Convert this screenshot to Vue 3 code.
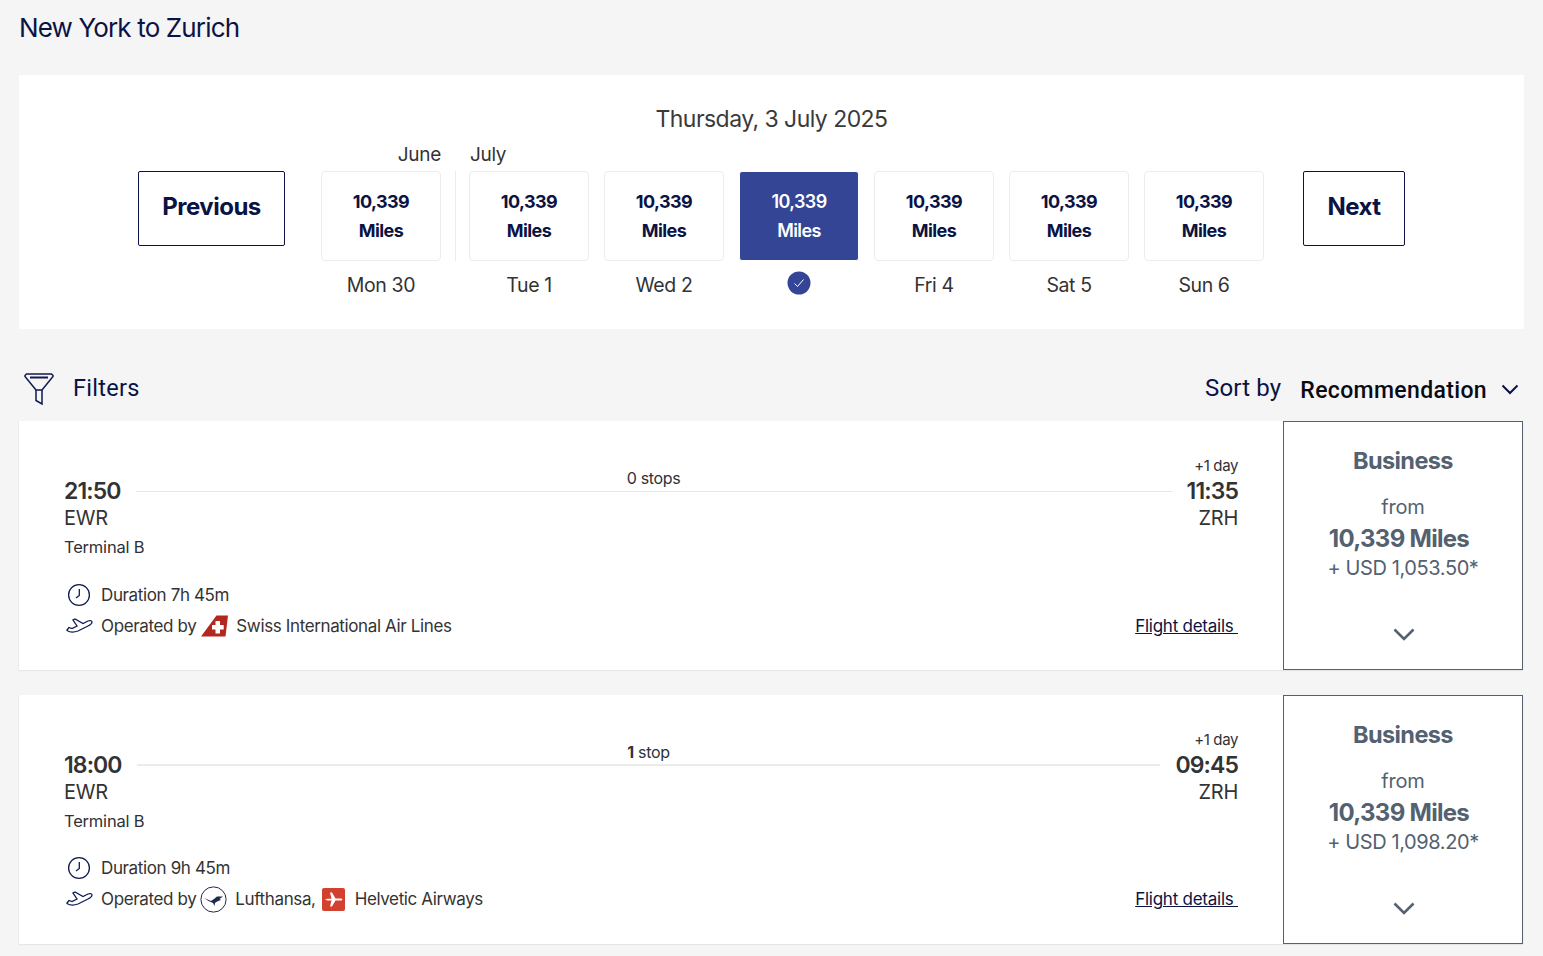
<script setup>
const days = [
  { label: 'Mon 30' }, { label: 'Tue 1', divider: true }, { label: 'Wed 2' },
  { label: '', selected: true }, { label: 'Fri 4' }, { label: 'Sat 5' }, { label: 'Sun 6' }
]
const flights = [
  { dep: '21:50', arr: '11:35', stops: '0', stopWord: ' stops', dur: '7h 45m', price: '1,053.50', swiss: true },
  { dep: '18:00', arr: '09:45', stops: '1', stopWord: ' stop', dur: '9h 45m', price: '1,098.20', swiss: false }
]
</script>

<template>
  <div class="page">
    <h1 class="title">New York to Zurich</h1>
    <section class="calendar">
      <div class="cal-date">Thursday, 3 July 2025</div>
      <div class="months">
        <span class="june">June</span>
        <span class="july">July</span>
      </div>
      <div class="strip">
        <button class="nav prev">Previous</button>
        <div class="days">
          <template v-for="d in days" :key="d.label">
            <div v-if="d.divider" class="divider"></div>
            <div class="day">
              <div class="tile" :class="{ sel: d.selected }">
                <span>10,339</span>
                <span>Miles</span>
              </div>
              <div class="day-label">
                <svg v-if="d.selected" class="check" width="24" height="24" viewBox="0 0 24 24">
                  <circle cx="12" cy="12" r="11.5" fill="#344596" />
                  <path d="M7.5 12.500l3 3 6-7" fill="none" stroke="#fff" stroke-width="1" />
                </svg>
                <template v-else>{{ d.label }}</template>
              </div>
            </div>
          </template>
        </div>
        <button class="nav next">Next</button>
      </div>
    </section>

    <div class="toolbar">
      <div class="filters">
        <svg width="32" height="34" viewBox="0 0 32 34" fill="none" stroke="#0f1a52" stroke-width="1.500">
          <path d="M3.500 3h25l1.500 1.500v1L19 19h-6L2 5.500v-1z" />
          <path d="M7 6.500h18" stroke-width="2" />
          <path d="M13 19v10.500l6 3.500V19" />
        </svg>
        <span>Filters</span>
      </div>
      <div class="sort">
        <span class="sort-label">Sort by</span>
        <span class="sort-value">Recommendation</span>
        <svg class="sort-chev" width="18" height="11" viewBox="0 0 18 11" fill="none" stroke="#0b1344" stroke-width="2">
          <path d="M1.500 1.500L9 9l7.500-7.500" />
        </svg>
      </div>
    </div>

    <div class="flights">
      <article v-for="f in flights" :key="f.dep" class="flight">
        <div class="info">
          <div class="ends">
            <div class="end">
              <div class="spacer"></div>
              <div class="time">{{ f.dep }}</div>
              <div class="code">EWR</div>
              <div class="terminal">Terminal B</div>
            </div>
            <div class="line-wrap">
              <div class="stops"><b v-if="f.stops === '1'">{{ f.stops }}</b><template v-else>{{ f.stops }}</template>{{ f.stopWord }}</div>
              <div class="line" :class="{ thick: !f.swiss }"></div>
            </div>
            <div class="end right">
              <div class="plus">+1 day</div>
              <div class="time">{{ f.arr }}</div>
              <div class="code">ZRH</div>
            </div>
          </div>
          <div class="meta">
            <div class="meta-row">
              <svg class="mi" width="29" height="24" viewBox="0 0 29 24" fill="none" stroke="#0f1a52" stroke-width="1.300">
                <circle cx="14" cy="12" r="10.400" />
                <path d="M14.300 6v6.500L11 15" />
              </svg>
              <span>Duration {{ f.dur }}</span>
            </div>
            <div class="meta-row">
              <svg class="mi" width="29" height="18" viewBox="0 0 29 18" fill="none" stroke="#0f1a52" stroke-width="1.300">
                <path d="M2 13l2-2.500 3 1 5-2.500-4-6 2-1 8 4.500 5-2.500c3-1 4 0 4 1 0 1.500-2 3-4 4l-10 5c-4 1.500-8 1.500-11-.5z" />
              </svg>
              <span>Operated by</span>
              <svg v-if="f.swiss" class="logo-swiss" width="27" height="22" viewBox="0 0 27 22">
                <path d="M0 21.500L15.500 .5H27L24.500 21.500z" fill="#b2281f" />
                <path d="M14.500 6h4.500v4h3.700v4.500H19V18.500h-4.500v-4H11v-4.500h3.500z" fill="#fff" />
              </svg>
              <svg v-else class="logo-lh" width="27" height="27" viewBox="0 0 27 27">
                <circle cx="13.500" cy="13.500" r="12.600" fill="#fff" stroke="#1d2a52" stroke-width="1" />
                <path d="M4 12l7 3c2-1 4-3 6-4.500h6l-3.500 2.500 1.500 1c-3 1-5 2-6 3l-.5 3-1.500-3c-3-1-6-3-9-5z" fill="#1d2a52" />
              </svg>
              <template v-if="f.swiss">
                <span>Swiss International Air Lines</span>
              </template>
              <template v-else>
                <span>Lufthansa,</span>
                <svg class="logo-hv" width="23" height="23" viewBox="0 0 23 23">
                  <rect width="23" height="23" rx="2" fill="#d2402f" />
                  <path d="M3 11.500l2.500-.8h4L8 4.500h2l3.500 6H18c1.500 0 2.500.5 2.500 1s-1 1-2.500 1h-4.500l-3.500 6H8l1.500-6h-4z" fill="#fff" />
                </svg>
                <span>Helvetic Airways</span>
              </template>
              <a class="details">Flight details&nbsp;</a>
            </div>
          </div>
        </div>
        <aside class="fare">
          <div class="fare-class">Business</div>
          <div class="fare-from">from</div>
          <div class="fare-miles">10,339 Miles</div>
          <div class="fare-usd">+ USD {{ f.price }}*</div>
          <svg class="fare-chev" width="22" height="13" viewBox="0 0 22 13" fill="none" stroke="#536170" stroke-width="2.600">
            <path d="M1.500 1.500L11 11l9.500-9.500" />
          </svg>
        </aside>
      </article>
    </div>
  </div>
</template>

<style>
html, body { margin: 0; background: #f5f5f5; }
</style>

<style scoped>
.page {
  box-sizing: border-box;
  height: 956px;
  overflow: hidden;
  padding: 0 19px;
  background: #f5f5f5;
  font-family: Inter, "Liberation Sans", sans-serif;
  color: #2f3137;
}
.title {
  margin: 0;
  padding-top: 12px;
  height: 75px;
  box-sizing: border-box;
  font-size: 26px;
  line-height: 32px;
  font-weight: 400;
  letter-spacing: -0.85px;
  color: #0b1344;
}
.calendar {
  height: 254px;
  box-sizing: border-box;
  background: #fff;
  padding-top: 28px;
}
.cal-date {
  text-align: center;
  font-size: 23px;
  line-height: 32px;
  letter-spacing: -0.55px;
  color: #3a3a3a;
  width: 1505px;
}
.months {
  display: flex;
  height: 36px;
  font-size: 19px;
  letter-spacing: -0.3px;
  line-height: 39px;
  color: #333;
}
.june { width: 422px; text-align: right; }
.july { margin-left: 29px; }
.strip { display: flex; padding-left: 119px; align-items: flex-start; }
.nav {
  height: 75px;
  box-sizing: border-box;
  background: #fff;
  border: 1px solid #0b1344;
  border-radius: 2px;
  font: 700 24px Inter, sans-serif;
  letter-spacing: -0.5px;
  color: #0b1344;
  padding: 0 0 4px;
}
.prev { width: 147px; margin-right: 36px; }
.next { width: 102px; margin-left: 39px; }
.days { display: flex; gap: 15px; }
.day { width: 120px; }
.divider { width: 1px; height: 90px; background: #ececec; margin: 0 -2px 0 -1px; }
.tile {
  height: 90px;
  box-sizing: border-box;
  border: 1px solid #ececec;
  border-radius: 4px;
  background: #fff;
  display: flex;
  flex-direction: column;
  align-items: center;
  justify-content: center;
  gap: 9px;
  font-size: 18px;
  font-weight: 700;
  letter-spacing: -0.6px;
  line-height: 20px;
  color: #0b1344;
}
.tile.sel { background: #344596; border-color: #fff; color: #fff; font-weight: 600; border-radius: 3px; }
.day-label {
  height: 46px;
  display: flex;
  align-items: center;
  justify-content: center;
  font-size: 19.500px;
  letter-spacing: -0.4px;
  color: #333;
  padding-top: 2px;
  box-sizing: border-box;
}
.check { margin-bottom: 5px; }
.toolbar {
  display: flex;
  justify-content: space-between;
  align-items: center;
  height: 92px;
  padding: 26px 5px 0 4px;
  box-sizing: border-box;
}
.filters { display: flex; align-items: center; gap: 18px; font-size: 23.500px; color: #0b1344; font-family: Roboto, sans-serif; letter-spacing: 0.3px; }
.sort { display: flex; align-items: center; }
.sort-label { font-size: 24px; color: #0b1344; font-family: Roboto, sans-serif; letter-spacing: 0.15px; margin-right: 19px; }
.sort-value { font: 500 23px Roboto, sans-serif; letter-spacing: 0.35px; color: #0a0a14; margin-right: 14px; padding-top: 5px; }
.sort-chev { margin-top: 3px; }
.flights { display: flex; flex-direction: column; gap: 24.500px; }
.flight {
  display: flex;
  height: 249px;
  flex: none;
  width: 1504px;
  background: #fff;
  box-shadow: 0 1px 1px #e6e6e6, -1px 0 0 #ededed;
}
.info {
  flex: 1;
  min-width: 0;
  padding: 34px 45px 0 45px;
  box-sizing: border-box;
  display: flex;
  flex-direction: column;
}
.ends { display: flex; align-items: flex-start; height: 124px; }
.end { display: flex; flex-direction: column; }
.end.right { align-items: flex-end; text-align: right; }
.spacer { height: 21px; }
.plus { height: 21px; font-size: 15px; line-height: 22px; letter-spacing: -0.4px; }
.time { font-size: 23px; line-height: 30px; font-weight: 600; letter-spacing: -0.9px; color: #333; }
.code { font-size: 20px; line-height: 24px; letter-spacing: -0.3px; color: #333; }
.terminal { width: 0; white-space: nowrap; font-size: 16.500px; line-height: 34px; letter-spacing: -0.2px; }
.line-wrap { flex: 1; position: relative; margin: 0 15px; height: 37px; }
.line { position: absolute; left: 0; right: 0; top: 36px; height: 1px; background: #e6e6e6; }
.line.thick { height: 2px; top: 35px; background: #ebebeb; }
.stops { position: absolute; left: 0; right: 0; top: 13px; text-align: center; font-size: 16px; line-height: 20px; letter-spacing: -0.3px; }
.stops b { font-weight: 700; }
.meta { display: flex; flex-direction: column; }
.meta-row { display: flex; align-items: center; height: 31px; font-size: 17px; letter-spacing: -0.37px; color: #333; position: relative; }
.mi { flex: none; width: 29px; margin-right: 7px; margin-left: 1px; }
.logo-swiss { margin: 0 8px 0 5px; }
.logo-lh { margin: 0 8px 0 4px; }
.logo-hv { margin: 0 10px 0 6px; }
.details { margin-left: auto; font-size: 17px; color: #0b1344; text-decoration: underline; letter-spacing: -0.25px; }
.fare {
  flex: none;
  width: 240px;
  box-sizing: border-box;
  border: 1px solid #536170;
  display: flex;
  flex-direction: column;
  align-items: center;
  color: #536170;
  padding-top: 23px;
  background: #fff;
}
.fare-class { font-size: 23.500px; line-height: 32px; font-weight: 700; letter-spacing: -0.6px; }
.fare-from { font-size: 20px; line-height: 26px; margin-top: 17px; letter-spacing: -0.2px; }
.fare-miles { font-size: 24px; line-height: 32px; font-weight: 700; letter-spacing: -0.7px; margin-top: 3px; margin-right: 8px; }
.fare-usd { font-size: 20px; line-height: 27px; letter-spacing: -0.4px; }
.fare-chev { margin-top: 46px; margin-left: 1px; }
</style>
